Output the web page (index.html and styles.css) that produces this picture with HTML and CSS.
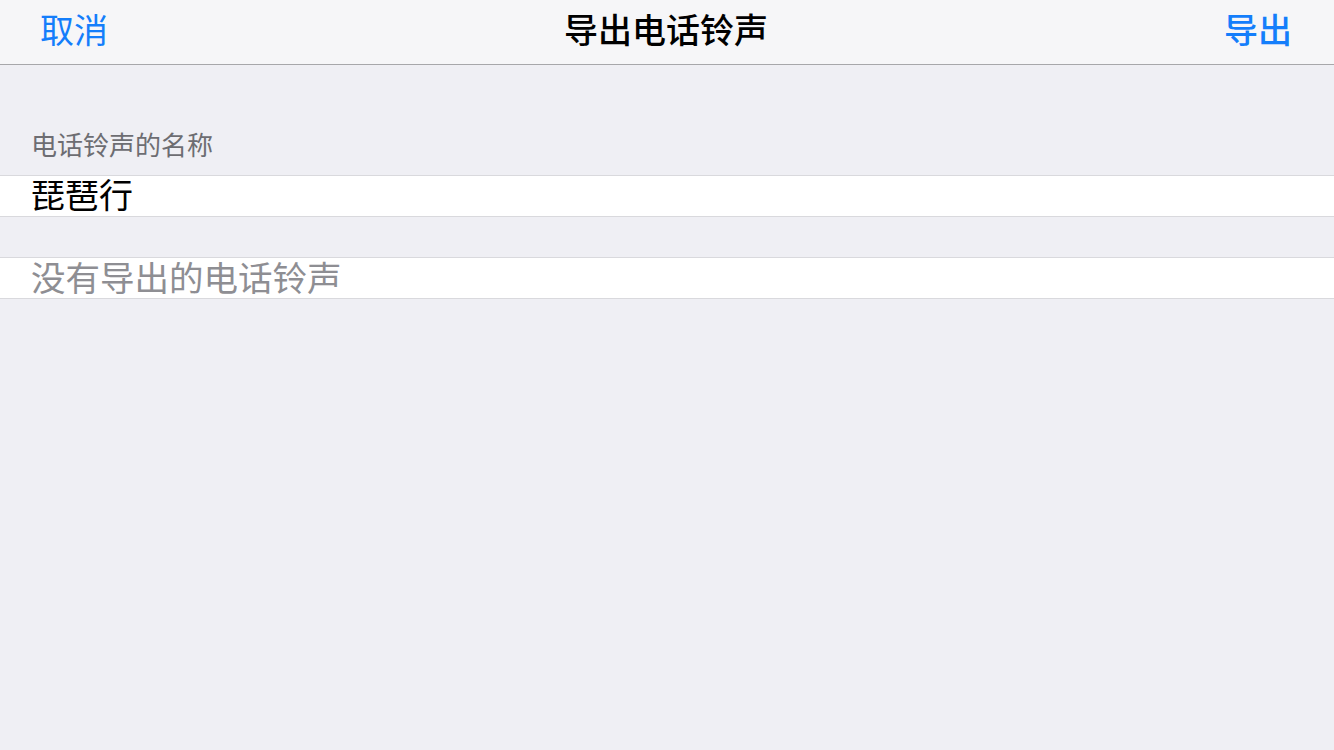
FILE: index.html
```html
<!DOCTYPE html>
<html lang="zh-CN">
<head>
<meta charset="utf-8">
<title>导出电话铃声</title>
<link rel="stylesheet" href="styles.css">
</head>
<body>
<div class="app">
  <header class="navbar">
    <span class="nav-btn">取消</span>
    <span class="nav-title">导出电话铃声</span>
    <span class="nav-btn nav-btn-strong">导出</span>
  </header>
  <div class="section-header">电话铃声的名称</div>
  <div class="cell"><span class="cell-text">琵琶行</span></div>
  <div class="spacer"></div>
  <div class="cell"><span class="cell-text placeholder">没有导出的电话铃声</span></div>
</div>
</body>
</html>
```

FILE: styles.css
```css
* { box-sizing: border-box; }
html, body {
  margin: 0;
  padding: 0;
  background: #efeff4;
}
body {
  font-family: "Noto Sans CJK SC", "Noto Sans", sans-serif;
  width: 1334px;
  height: 750px;
  overflow: hidden;
}
.app {
  display: flex;
  flex-direction: column;
}
.navbar {
  height: 65px;
  background: #f6f6f8;
  border-bottom: 1px solid #a7a7aa;
  display: flex;
  align-items: center;
  justify-content: space-between;
  padding: 0 42px 7px 40px;
}
.nav-btn {
  color: #147efb;
  font-size: 34px;
  line-height: 40px;
  width: 140px;
}
.nav-btn-strong {
  text-align: right;
  font-weight: 500;
}
.nav-title {
  font-size: 34px;
  line-height: 40px;
  font-weight: 500;
  color: #000;
}
.section-header {
  height: 110px;
  display: flex;
  align-items: flex-end;
  padding: 0 0 16px 31px;
  font-size: 26px;
  line-height: 30px;
  color: #6d6d72;
}
.cell {
  height: 42px;
  background: #fff;
  border-top: 1px solid #d9d9dd;
  border-bottom: 1px solid #d9d9dd;
  display: flex;
  align-items: center;
  padding: 0 0 5px 31px;
}
.cell-text {
  font-size: 34px;
  line-height: 36px;
  color: #000;
}
.cell-text.placeholder {
  font-size: 34.5px;
  color: #8e8e93;
}
.spacer {
  height: 40px;
}
```
